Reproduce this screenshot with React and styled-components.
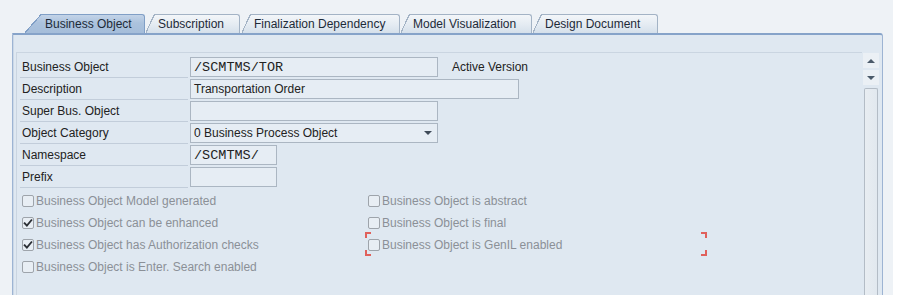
import React from 'react';
import styled, { createGlobalStyle, css } from 'styled-components';

const Global = createGlobalStyle`
  html, body { margin: 0; padding: 0; background: #ffffff; }
  body {
    font-family: "Liberation Sans", Arial, sans-serif;
    font-size: 12px;
    color: #222;
  }
`;

const Screen = styled.div`
  width: 893px;
  height: 295px;
  box-sizing: border-box;
  background: #eef2f6;
  padding: 14px 10px 0 12px;
  display: flex;
  flex-direction: column;
`;

const TabStrip = styled.div`
  display: flex;
  align-items: flex-end;
  height: 19px;
`;

const ACTIVE_FILL = 'linear-gradient(to bottom, #c3d4e8 0%, #abc2dd 45%, #a5bdda 100%)';
const INACTIVE_FILL = 'linear-gradient(to bottom, #f3f6f9 0%, #e4ebf2 55%, #d5e0eb 100%)';

const Tab = styled.div`
  position: relative;
  box-sizing: border-box;
  width: ${p => p.$w}px;
  height: 19px;
  margin-left: ${p => p.$gap + (p.$active ? 17 : 9)}px;
  padding-left: 3px;
  display: flex;
  align-items: center;
  font-size: 12px;
  color: #1d2a38;
  white-space: nowrap;
  background: ${p => (p.$active ? ACTIVE_FILL : INACTIVE_FILL)};
  border-top: 1px solid ${p => (p.$active ? '#809fc6' : '#a3b3c5')};
  border-right: 1px solid ${p => (p.$active ? '#809fc6' : '#a3b3c5')};
  border-top-right-radius: 3px;

  &::before {
    content: '';
    position: absolute;
    top: -1px;
    bottom: 0;
    left: -${p => (p.$active ? 17 : 9)}px;
    width: ${p => (p.$active ? 17 : 9)}px;
    background:
      linear-gradient(to bottom right,
        transparent calc(50% - 0.9px),
        ${p => (p.$active ? '#809fc6' : '#a3b3c5')} calc(50% - 0.9px),
        ${p => (p.$active ? '#809fc6' : '#a3b3c5')} calc(50% + 0.3px),
        transparent calc(50% + 0.3px)),
      ${p => (p.$active ? ACTIVE_FILL : INACTIVE_FILL)};
    -webkit-mask-image: linear-gradient(to bottom right, transparent calc(50% - 0.9px), #000 calc(50% - 0.9px));
    mask-image: linear-gradient(to bottom right, transparent calc(50% - 0.9px), #000 calc(50% - 0.9px));
  }
`;

const Panel = styled.div`
  flex: 1;
  display: flex;
  min-height: 0;
  background: #dfe8f1;
  border-top: 2px solid #86a3c9;
  border-left: 1px solid #9db4d3;
  border-right: 1px solid #9db4d3;
  border-top-right-radius: 3px;
  box-shadow: inset 1px 0 0 #cbd8e7;
  padding: 17px 3px 0 3px;
`;

const ScrollArea = styled.div`
  flex: 1;
  border-top: 1px solid #cad5e1;
  border-left: 1px solid #cad5e1;
  padding: 3px 0 0 3px;
  display: flex;
  flex-direction: column;
`;

const FormRow = styled.div`
  display: flex;
  align-items: center;
  height: 22px;
`;

const Label = styled.div`
  box-sizing: border-box;
  width: 168px;
  height: 22px;
  padding: 0 0 0 2px;
  line-height: 22px;
  border-bottom: 1px solid #c2cdda;
  color: #222;
  white-space: nowrap;
`;

const Field = styled.div`
  position: relative;
  box-sizing: border-box;
  width: ${p => p.$w}px;
  height: 20px;
  margin-left: 2px;
  padding: 0 3px;
  display: flex;
  align-items: center;
  background: #e6edf4;
  border: 1px solid #abb6c2;
  color: #222;
  white-space: nowrap;
  ${p =>
    p.$mono
      ? css`
          font-family: "Liberation Mono", "Courier New", monospace;
          font-size: 13.5px;
          letter-spacing: 0;
        `
      : css`
          font-size: 12px;
        `}
`;

const DropArrow = styled.span`
  margin-left: auto;
  width: 0;
  height: 0;
  border-left: 4px solid transparent;
  border-right: 4px solid transparent;
  border-top: 4px solid #3e4a58;
  margin-right: 2px;
`;

const SideNote = styled.span`
  margin-left: 14px;
  color: #222;
  white-space: nowrap;
`;

const CheckGrid = styled.div`
  display: grid;
  grid-template-columns: 346px 1fr;
  grid-auto-rows: 22px;
  padding: 2px 0 0 2px;
`;

const CheckItem = styled.div`
  position: relative;
  display: flex;
  align-items: center;
  color: #8b9097;
  white-space: nowrap;
`;

const Box = styled.span`
  box-sizing: border-box;
  width: 12px;
  height: 12px;
  border: 1px solid #9ea4ab;
  border-radius: 2px;
  background: #e8eef4;
  margin-right: 2px;
  display: flex;
  align-items: center;
  justify-content: center;
`;

const FocusMarks = styled.span`
  position: absolute;
  left: -3px;
  top: -2px;
  width: 342px;
  height: 24px;
  pointer-events: none;
  --c: #e0615c;
  background:
    linear-gradient(var(--c), var(--c)) left top / 6px 2px no-repeat,
    linear-gradient(var(--c), var(--c)) left top / 2px 6px no-repeat,
    linear-gradient(var(--c), var(--c)) right top / 6px 2px no-repeat,
    linear-gradient(var(--c), var(--c)) right top / 2px 6px no-repeat,
    linear-gradient(var(--c), var(--c)) left bottom / 6px 2px no-repeat,
    linear-gradient(var(--c), var(--c)) left bottom / 2px 6px no-repeat,
    linear-gradient(var(--c), var(--c)) right bottom / 6px 2px no-repeat,
    linear-gradient(var(--c), var(--c)) right bottom / 2px 6px no-repeat;
`;

const ScrollBar = styled.div`
  width: 16px;
  margin-left: 1px;
  padding-top: 1px;
  display: flex;
  flex-direction: column;
`;

const ScrollBtn = styled.div`
  height: 15px;
  margin-top: ${p => p.$mt || 0}px;
  display: flex;
  align-items: center;
  justify-content: center;
  background: #ebf0f5;
`;

const Arrow = styled.span`
  width: 0;
  height: 0;
  border-left: 4px solid transparent;
  border-right: 4px solid transparent;
  ${p =>
    p.$up
      ? css`border-bottom: 4px solid #4b5a6a;`
      : css`border-top: 4px solid #4b5a6a;`}
`;

const Track = styled.div`
  flex: 1;
  margin: 3px 1px 0 1px;
  border: 1px solid #b3bcc6;
  border-bottom: none;
  border-radius: 2px 2px 0 0;
  background: linear-gradient(to right, #e8edf2, #e1e8ef);
`;

const CheckMark = () => (
  <svg width="10" height="10" viewBox="0 0 10 10">
    <path d="M1.6 5.2 L3.9 7.6 L8.4 2.2" fill="none" stroke="#2b2f35" strokeWidth="1.8" strokeLinecap="square" />
  </svg>
);

const tabs = [
  { label: 'Business Object', w: 103, gap: 13, active: true },
  { label: 'Subscription', w: 85, gap: 1 },
  { label: 'Finalization Dependency', w: 149, gap: 2 },
  { label: 'Model Visualization', w: 122, gap: 1 },
  { label: 'Design Document', w: 116, gap: 1 },
];

const checks = [
  { text: 'Business Object Model generated', checked: false },
  { text: 'Business Object is abstract', checked: false },
  { text: 'Business Object can be enhanced', checked: true },
  { text: 'Business Object is final', checked: false },
  { text: 'Business Object has Authorization checks', checked: true },
  { text: 'Business Object is GenIL enabled', checked: false, focused: true },
  { text: 'Business Object is Enter. Search enabled', checked: false },
];

export default function App() {
  return (
    <>
      <Global />
      <Screen>
        <TabStrip>
          {tabs.map(t => (
            <Tab key={t.label} $w={t.w} $gap={t.gap} $active={t.active}>
              {t.label}
            </Tab>
          ))}
        </TabStrip>
        <Panel>
          <ScrollArea>
            <FormRow>
              <Label>Business Object</Label>
              <Field $w={248} $mono>/SCMTMS/TOR</Field>
              <SideNote>Active Version</SideNote>
            </FormRow>
            <FormRow>
              <Label>Description</Label>
              <Field $w={329}>Transportation Order</Field>
            </FormRow>
            <FormRow>
              <Label>Super Bus. Object</Label>
              <Field $w={248} />
            </FormRow>
            <FormRow>
              <Label>Object Category</Label>
              <Field $w={248}>
                0 Business Process Object
                <DropArrow />
              </Field>
            </FormRow>
            <FormRow>
              <Label>Namespace</Label>
              <Field $w={87} $mono>/SCMTMS/</Field>
            </FormRow>
            <FormRow>
              <Label>Prefix</Label>
              <Field $w={87} />
            </FormRow>
            <CheckGrid>
              {checks.map(c => (
                <CheckItem key={c.text}>
                  <Box>{c.checked && <CheckMark />}</Box>
                  {c.text}
                  {c.focused && <FocusMarks />}
                </CheckItem>
              ))}
            </CheckGrid>
          </ScrollArea>
          <ScrollBar>
            <ScrollBtn><Arrow $up /></ScrollBtn>
            <ScrollBtn $mt={2}><Arrow /></ScrollBtn>
            <Track />
          </ScrollBar>
        </Panel>
      </Screen>
    </>
  );
}
